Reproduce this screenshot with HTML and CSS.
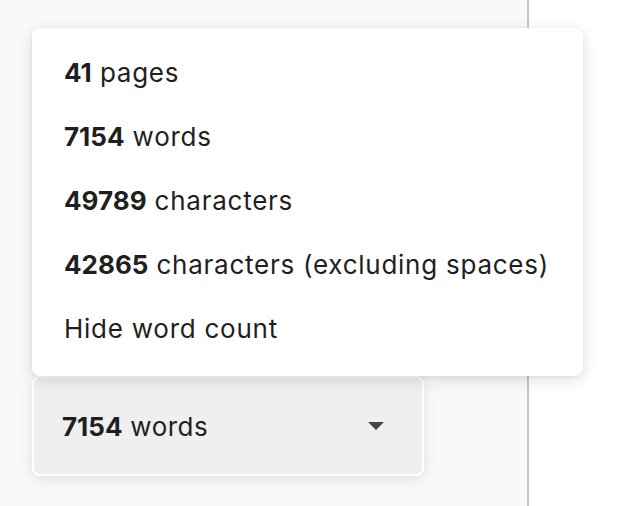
FILE: index.html
```html
<!DOCTYPE html>
<html>
<head>
<meta charset="utf-8">
<link rel="stylesheet" href="styles.css">
</head>
<body>
<div class="stage">
  <div class="pane">
    <div class="menu">
      <div class="item"><b>41</b> pages</div>
      <div class="item"><b>7154</b> words</div>
      <div class="item"><b>49789</b> characters</div>
      <div class="item"><b>42865</b> characters (excluding spaces)</div>
      <div class="item">Hide word count</div>
    </div>
    <div class="button">
      <span><b>7154</b> words</span>
      <svg class="caret" width="16" height="8" viewBox="0 0 16 8"><path d="M0 0h16L8 8z" fill="#444746"/></svg>
    </div>
  </div>
  <div class="divider"></div>
  <div class="side"></div>
</div>
</body>
</html>
```
FILE: styles.css
```css
html, body {
  margin: 0;
  padding: 0;
  width: 620px;
  height: 506px;
  overflow: hidden;
  font-family: Inter, "Liberation Sans", sans-serif;
  color: #1f1f1f;
}
.stage {
  display: flex;
  height: 506px;
}
.pane {
  width: 527px;
  background: #f8f9fa;
  padding-top: 28px;
  padding-left: 32px;
  box-sizing: border-box;
  position: relative;
}
.divider {
  width: 2px;
  background: #c7c7c7;
}
.side {
  flex: 1;
  background: #fff;
}
.menu {
  position: absolute;
  top: 28px;
  left: 32px;
  width: 551px;
  height: 348px;
  box-sizing: border-box;
  background: #fff;
  border-radius: 8px;
  box-shadow: 0 4px 16px rgba(0,0,0,0.12), 0 1px 4px rgba(0,0,0,0.06);
  padding: 13px 0 0 32px;
  z-index: 2;
}
.item {
  height: 64px;
  line-height: 64px;
  font-size: 26px;
  letter-spacing: 0.75px;
  white-space: nowrap;
}
.item b, .button b {
  font-weight: 700;
  letter-spacing: 0;
}
.button {
  margin-top: 348px;
  width: 392px;
  height: 100px;
  box-sizing: border-box;
  background: #efefef;
  border: 2px solid #fff;
  border-radius: 8px;
  box-shadow: 0 4px 14px rgba(0,0,0,0.10);
  display: flex;
  align-items: center;
  justify-content: space-between;
  padding: 0 38px 0 28px;
  font-size: 26px;
  letter-spacing: 0.5px;
}
.caret {
  display: block;
}
```
